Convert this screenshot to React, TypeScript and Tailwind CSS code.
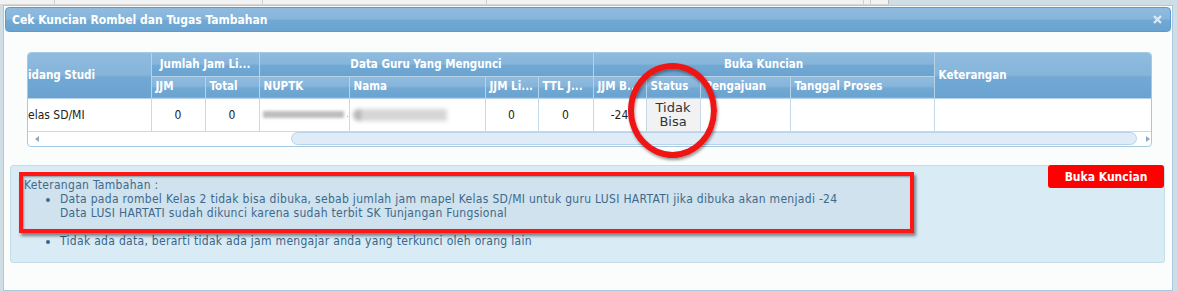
import React from "react";

const headGrad =
    "bg-[linear-gradient(to_bottom,#8fbbde_0%,#86b5da_48%,#72a8d3_54%,#6aa3d1_100%)]";

// column widths of the lock table
const cols = [123, 54, 54, 90, 136, 53, 55, 53, 54, 90, 144, 217];

export default function App() {
    return (
        <div className="relative h-[291px] w-[1177px] overflow-hidden bg-[#cfdde5] font-['DejaVu_Sans_Condensed','DejaVu_Sans',sans-serif]">

            {/* Page behind the dialog */}
            <div className="flex h-[5px]">
                <div className="flex h-full w-[889px] border-b border-[#d8d8d8] bg-[#f2f2f2]">
                    <div className="w-[55px] border-r border-[#cfcfcf]" />
                    <div className="w-[208px] border-r border-[#cfcfcf]" />
                    <div className="w-[224px] border-r border-[#cfcfcf]" />
                    <div className="w-[377px] border-r border-[#cfcfcf]" />
                    <div className="w-[7px] border-r border-[#cfcfcf]" />
                    <div className="flex-1 border-r border-[#b9b9b9]" />
                </div>
            </div>

            {/* Dialog */}
            <div className="ml-[3px] h-[286px] w-[1170px] border border-[#a9c7de] bg-[#fbfdfd] p-px">

                {/* Title bar */}
                <div className={`flex h-[25px] w-[1166px] items-center justify-between rounded-[4px] border border-[#5b9ad2] pl-[6px] pr-[8px] ${headGrad}`}>
                    <span className="text-[12px] font-bold text-white">
                        Cek Kuncian Rombel dan Tugas Tambahan
                    </span>
                    <svg width="9" height="9" viewBox="0 0 9 9">
                        <path d="M1 1L8 8M8 1L1 8" stroke="#dfe9f2" strokeWidth="2.4" />
                    </svg>
                </div>

                {/* Table */}
                <div className="ml-[22px] mt-[20px] w-[1125px] overflow-hidden rounded-[4px] border border-[#a6c9e2] bg-white">
                    <table className="w-[1123px] table-fixed border-collapse text-[12px]">
                        <colgroup>
                            {cols.map((w, i) => (
                                <col key={i} style={{width: w}} />
                            ))}
                        </colgroup>
                        <thead className="text-[11.5px] font-bold text-white">
                            <tr className="h-[23px]">
                                <th rowSpan={2} className={`whitespace-nowrap border-r border-b border-[#b6d3ea] text-left ${headGrad}`}>
                                    idang Studi
                                </th>
                                <th colSpan={2} className={`border-r border-b border-[#b6d3ea] ${headGrad}`}>Jumlah Jam Li...</th>
                                <th colSpan={4} className={`border-r border-b border-[#b6d3ea] ${headGrad}`}>Data Guru Yang Mengunci</th>
                                <th colSpan={4} className={`border-r border-b border-[#b6d3ea] ${headGrad}`}>Buka Kuncian</th>
                                <th rowSpan={2} className={`border-b border-[#b6d3ea] pl-[4px] text-left ${headGrad}`}>Keterangan</th>
                            </tr>
                            <tr className="h-[22px] text-left">
                                {["JJM", "Total", "NUPTK", "Nama", "JJM Li...", "TTL J...", "JJM B...", "Status", "Pengajuan", "Tanggal Proses"].map(h => (
                                    <th key={h} className={`whitespace-nowrap border-r border-b border-[#b6d3ea] pl-[4px] ${headGrad}`}>
                                        {h}
                                    </th>
                                ))}
                            </tr>
                        </thead>
                        <tbody className="text-[#222]">
                            <tr className="h-[33px]">
                                <td className="whitespace-nowrap border-r border-[#c5dbec]">
                                    elas SD/MI
                                </td>
                                <td className="border-r border-[#c5dbec] text-center">0</td>
                                <td className="border-r border-[#c5dbec] text-center">0</td>
                                <td className="border-r border-[#c5dbec] pl-[3px]">
                                    <div className="flex items-center gap-[2px]">
                                        <div className="h-[7px] w-[82px] bg-[#bdbdbd] blur-[1.5px]" />
                                        <span className="text-[8px] text-[#888]">.</span>
                                    </div>
                                </td>
                                <td className="border-r border-[#c5dbec] pl-[3px]">
                                    <div className="flex h-[14px] w-[94px] items-center blur-[2px]">
                                        <div className="h-[12px] w-[8px] rounded-l-full bg-[#b5b5b5]" />
                                        <div className="h-[12px] flex-1 bg-[#d6d6d6]" />
                                    </div>
                                </td>
                                <td className="border-r border-[#c5dbec] text-center">0</td>
                                <td className="border-r border-[#c5dbec] text-center">0</td>
                                <td className="border-r border-[#c5dbec] text-center">-24</td>
                                <td className="border-r border-[#c5dbec] bg-[#f2f2f2] text-center font-['DejaVu_Sans',sans-serif] text-[13px] leading-[14px] text-[#333]">
                                    Tidak<br />Bisa
                                </td>
                                <td className="border-r border-[#c5dbec]" />
                                <td className="border-r border-[#c5dbec]" />
                                <td />
                            </tr>
                            <tr>
                                <td colSpan={12} className="h-[15px] border-t border-[#c5dbec] p-0">
                                    <div className="flex h-[14px] items-center">
                                        <svg className="ml-[7px]" width="4" height="6" viewBox="0 0 4 6">
                                            <path d="M4 0L0 3L4 6Z" fill="#8fa9bf" />
                                        </svg>
                                        <div className="ml-[252px] h-[13px] w-[846px] rounded-full border border-[#b8d3ea] bg-[#dfecf8]" />
                                        <svg className="ml-[9px]" width="4" height="6" viewBox="0 0 4 6">
                                            <path d="M0 0L4 3L0 6Z" fill="#8fa9bf" />
                                        </svg>
                                    </div>
                                </td>
                            </tr>
                        </tbody>
                    </table>
                </div>

                {/* Info box */}
                <div className="relative ml-[5px] mt-[18px] h-[98px] w-[1155px] rounded-[3px] border border-[#c4dde9] bg-[#d9ebf5] pl-[13px] pt-[12px] text-[12px] leading-[14px] tracking-[0.3px] text-[#36668a]">
                    <button className="absolute right-0 top-[-1px] h-[23px] w-[116px] rounded-[3px] bg-[#ff0000] text-[12px] font-bold tracking-normal text-white">
                        Buka Kuncian
                    </button>
                    <div>Keterangan Tambahan :</div>
                    <ul className="ml-[36px] list-disc">
                        <li>
                            Data pada rombel Kelas 2 tidak bisa dibuka, sebab jumlah jam mapel Kelas SD/MI untuk guru LUSI HARTATI jika dibuka akan menjadi -24
                            <br />
                            Data LUSI HARTATI sudah dikunci karena sudah terbit SK Tunjangan Fungsional
                            <br />
                            <br />
                        </li>
                        <li>Tidak ada data, berarti tidak ada jam mengajar anda yang terkunci oleh orang lain</li>
                    </ul>

                    {/* Red highlight annotation */}
                    <div className="absolute left-[8px] top-[6px] h-[61px] w-[895px] border-4 border-[#ff1717] bg-[#7f95a3]/10 shadow-[2px_3px_3px_rgba(0,0,0,0.45),inset_1px_1px_2px_rgba(0,0,0,0.35)]" />
                </div>
            </div>

            {/* Red circle annotation */}
            <div className="absolute left-[628px] top-[63px] h-[95px] w-[89px] rounded-[50%] border-[6px] border-[#ee1515] shadow-[1px_2px_3px_rgba(0,0,0,0.4),inset_1px_2px_3px_rgba(0,0,0,0.35)]" />
        </div>
    );
}
